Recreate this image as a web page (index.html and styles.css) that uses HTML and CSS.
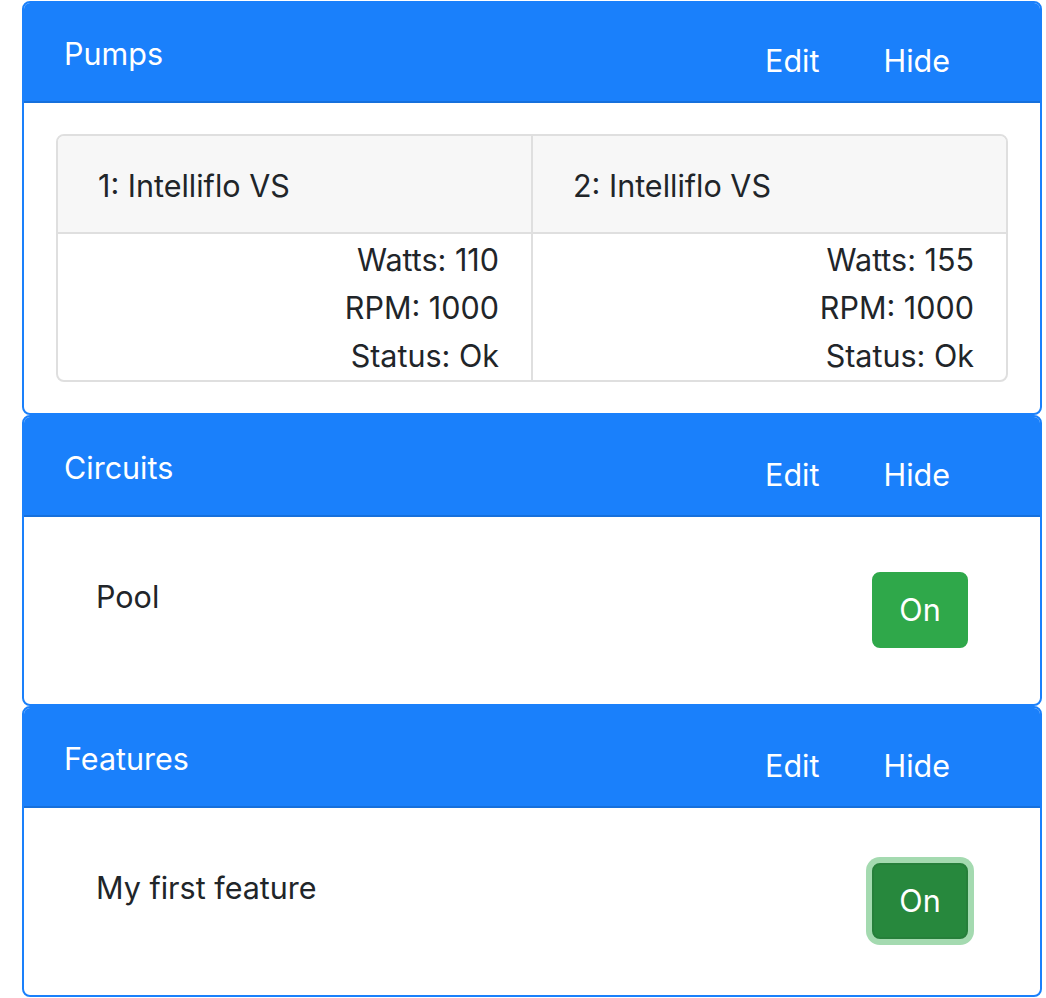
FILE: index.html
```
<!doctype html>
<html lang="en">
	<head>
		<meta charset="UTF-8">
		<meta name="viewport" content="width=device-width, initial-scale=1.0">
		<title>Pool Controller</title>
		<link rel="stylesheet" href="styles.css">
	</head>
	<body>

		<div class="wrap">

			<!-- pumps -->
			<div class="card">
				<div class="card-header">
					<h2 class="card-title">Pumps</h2>
					<div class="head-btns">
						<button type="button" class="btn-link">Edit</button>
						<button type="button" class="btn-link">Hide</button>
					</div>
				</div>
				<div class="card-body pumps">
					<div class="pump-group">
						<div class="pump">
							<div class="pump-head">1: Intelliflo VS</div>
							<div class="pump-body">
								<div>Watts: 110</div>
								<div>RPM: 1000</div>
								<div>Status: Ok</div>
							</div>
						</div>
						<div class="pump">
							<div class="pump-head">2: Intelliflo VS</div>
							<div class="pump-body">
								<div>Watts: 155</div>
								<div>RPM: 1000</div>
								<div>Status: Ok</div>
							</div>
						</div>
					</div>
				</div>
			</div>

			<!-- circuits -->
			<div class="card">
				<div class="card-header">
					<h2 class="card-title">Circuits</h2>
					<div class="head-btns">
						<button type="button" class="btn-link">Edit</button>
						<button type="button" class="btn-link">Hide</button>
					</div>
				</div>
				<div class="card-body">
					<div class="item">
						<span class="item-name">Pool</span>
						<button type="button" class="btn-on">On</button>
					</div>
				</div>
			</div>

			<!-- features -->
			<div class="card">
				<div class="card-header">
					<h2 class="card-title">Features</h2>
					<div class="head-btns">
						<button type="button" class="btn-link">Edit</button>
						<button type="button" class="btn-link">Hide</button>
					</div>
				</div>
				<div class="card-body">
					<div class="item">
						<span class="item-name">My first feature</span>
						<button type="button" class="btn-on focus">On</button>
					</div>
				</div>
			</div>

		</div>

	</body>
</html>
```

FILE: styles.css
```
*{
	box-sizing:border-box;
}

body
{
	margin:0;
	background-color:#fff;
	color:#212529;
	font-family:Inter, "Noto Sans", sans-serif;
	font-size:30.5px;
	line-height:48px;
}

.wrap
{
	width:1020px;
	margin-top:1px;
	margin-left:22px;
}

.card
{
	border:2px solid #1a80fb;
	border-radius:8px;
	overflow:hidden;
	background-color:#fff;
}

.card-header
{
	display:flex;
	justify-content:space-between;
	align-items:flex-start;
	background-color:#1a80fb;
	color:#fff;
	padding:27px 40px 23px;
	border-bottom:2px solid #1670dc;
}

.card-title
{
	margin:0;
	font-size:30.5px;
	font-weight:400;
	line-height:48px;
}

.head-btns
{
	display:flex;
	gap:16px;
	margin-top:7px;
	margin-bottom:-7px;
	margin-right:26px;
}

.btn-link
{
	font-family:inherit;
	font-size:30.5px;
	line-height:48px;
	color:#fff;
	background:none;
	border:none;
	padding:0 24px;
}

.card-body
{
	padding:40px;
}

.card-body.pumps
{
	padding:31px 32px;
}

.pump-group
{
	display:flex;
	border:2px solid #dfdfdf;
	border-radius:8px;
	overflow:hidden;
}

.pump
{
	flex:1;
}

.pump + .pump
{
	border-left:2px solid #dfdfdf;
}

.pump-head
{
	background-color:#f7f7f7;
	padding:26px 40px 22px;
	border-bottom:2px solid #dfdfdf;
}

.pump-body
{
	text-align:right;
	padding:2px 32px 0;
}

.item
{
	display:flex;
	justify-content:space-between;
	align-items:flex-start;
	padding:16px 32px;
}

.btn-on
{
	font-family:inherit;
	font-size:30.5px;
	line-height:48px;
	width:96px;
	padding:12px 0;
	color:#fff;
	background-color:#2fa84a;
	border:2px solid #2fa84a;
	border-radius:8px;
	margin-top:-1px;
}

.btn-on.focus
{
	background-color:#27883d;
	border-color:#267f3a;
	box-shadow:0 0 0 6px #a4dab0;
}
```
